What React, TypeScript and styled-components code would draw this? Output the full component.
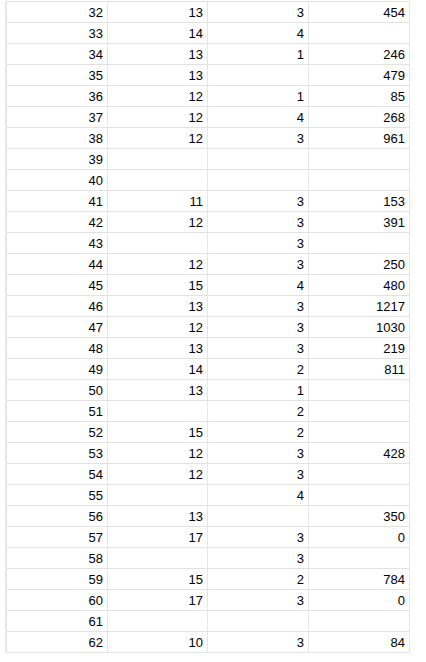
import styled, { createGlobalStyle } from 'styled-components'

type Row = [number, string, string, string]

const rows: Row[] = [
  [32, '13', '3', '454'],
  [33, '14', '4', ''],
  [34, '13', '1', '246'],
  [35, '13', '', '479'],
  [36, '12', '1', '85'],
  [37, '12', '4', '268'],
  [38, '12', '3', '961'],
  [39, '', '', ''],
  [40, '', '', ''],
  [41, '11', '3', '153'],
  [42, '12', '3', '391'],
  [43, '', '3', ''],
  [44, '12', '3', '250'],
  [45, '15', '4', '480'],
  [46, '13', '3', '1217'],
  [47, '12', '3', '1030'],
  [48, '13', '3', '219'],
  [49, '14', '2', '811'],
  [50, '13', '1', ''],
  [51, '', '2', ''],
  [52, '15', '2', ''],
  [53, '12', '3', '428'],
  [54, '12', '3', ''],
  [55, '', '4', ''],
  [56, '13', '', '350'],
  [57, '17', '3', '0'],
  [58, '', '3', ''],
  [59, '15', '2', '784'],
  [60, '17', '3', '0'],
  [61, '', '', ''],
  [62, '10', '3', '84'],
]

const widths = [101, 100, 101, 101]

const GlobalStyle = createGlobalStyle`
  body {
    margin: 0;
    background: #fff;
    font-family: "Liberation Sans", Arial, sans-serif;
  }
`

const Page = styled.main`
  padding: 1px 0 0 5px;
`

const Sheet = styled.div`
  display: grid;
  grid-template-columns: ${widths.map((w) => `${w}px`).join(' ')};
  width: max-content;
  border-left: 2px solid #e8e8e8;
  border-top: 1px solid #e2e2e2;
`

// one spreadsheet cell, numbers right aligned
const Cell = styled.div`
  box-sizing: border-box;
  height: 21px;
  line-height: 20px;
  padding: 1px 4px 0 4px;
  border-bottom: 1px solid #e2e2e2;
  border-right: 1px solid #e6e6e6;
  text-align: right;
  font-size: 13px;
  color: #000;
  overflow: hidden;
  white-space: nowrap;
`

export default function App() {
  return (
    <>
      <GlobalStyle />
      <Page>
        <Sheet>
          {rows.map((r) =>
            r.map((v, i) => <Cell key={`${r[0]}-${i}`}>{v}</Cell>)
          )}
        </Sheet>
      </Page>
    </>
  )
}
